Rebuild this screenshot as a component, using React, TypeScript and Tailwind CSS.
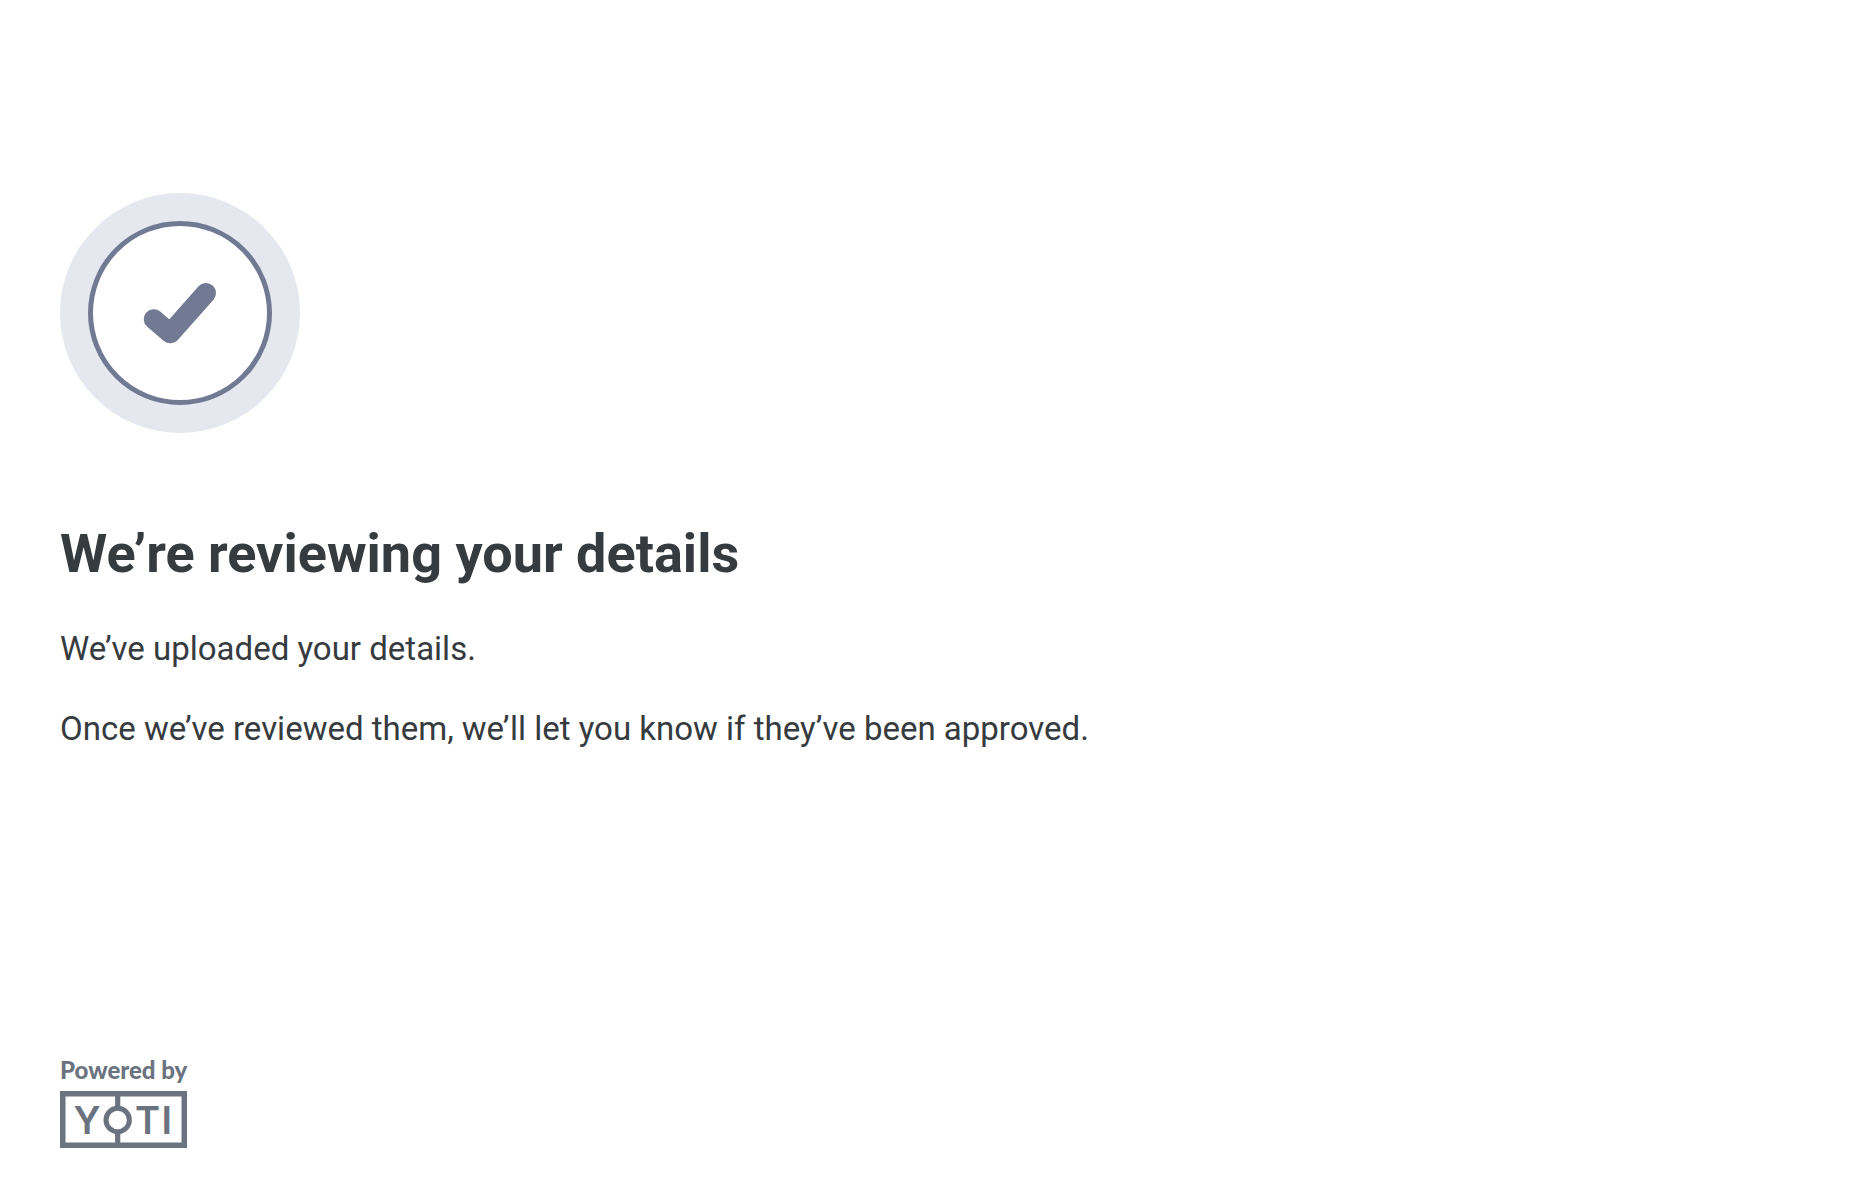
import React from 'react';

const CheckBadge: React.FC = () => {
  return (
    <svg className="h-60 w-60" viewBox="0 0 240 240" fill="none" aria-hidden="true">
      <circle cx="120" cy="120" r="120" fill="#e5e8ef" />
      <circle cx="120" cy="120" r="89.5" fill="#ffffff" stroke="#717993" strokeWidth="5" />
      <path
        d="M93.7 126.2 110.3 140.3 146 100"
        stroke="#717993"
        strokeWidth="20"
        strokeLinecap="round"
        strokeLinejoin="round"
      />
    </svg>
  );
};

const YotiLogo: React.FC = () => {
  return (
    <svg
      className="h-[57px] w-[127px] font-['Inter',sans-serif]"
      viewBox="0 0 127 57"
      fill="none"
      role="img"
      aria-label="Yoti"
    >
      <rect x="2.75" y="2.75" width="121.5" height="51.5" stroke="#6b7380" strokeWidth="5.5" />
      <path d="M57.7 3v13M57.7 42v12" stroke="#6b7380" strokeWidth="5.2" />
      <circle cx="57.7" cy="29" r="11.7" stroke="#6b7380" strokeWidth="5" />
      <g fill="#6b7380" fontSize="38" fontWeight="600">
        <text x="13.5" y="42.5">Y</text>
        <text x="75" y="42.5">T</text>
        <text x="101.5" y="42.5">I</text>
      </g>
    </svg>
  );
};

const App: React.FC = () => {
  return (
    <div className="flex min-h-screen flex-col bg-white px-[60px] pt-[193px] pb-[46px] font-['Roboto',sans-serif] text-[#363b40]">
      {/* Main content */}
      <main>
        <CheckBadge />
        <h1 className="mt-[85px] text-[54px] leading-[72px] font-bold">We’re reviewing your details</h1>
        <div className="mt-[39px] flex flex-col gap-10 text-[33px] leading-10 font-normal">
          <p>We’ve uploaded your details.</p>
          <p>Once we’ve reviewed them, we’ll let you know if they’ve been approved.</p>
        </div>
      </main>

      {/* Branding */}
      <footer className="mt-auto flex flex-col items-start gap-[9px]">
        <p className="font-['Lato',sans-serif] text-2xl leading-6 font-black text-[#6b7380]">Powered by</p>
        <YotiLogo />
      </footer>
    </div>
  );
};

export default App;
